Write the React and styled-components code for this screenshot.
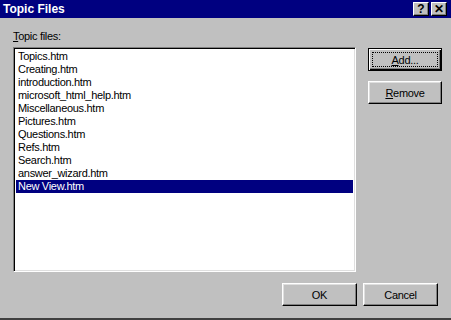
import React from "react";
import styled, { createGlobalStyle } from "styled-components";

const Global = createGlobalStyle`
  html, body { margin: 0; padding: 0; background: #c0c0c0; }
  body { font-family: "Liberation Sans", Arial, sans-serif; font-size: 11px; letter-spacing: -0.3px; }
`;

const Window = styled.div`
  width: 451px;
  height: 320px;
  box-sizing: border-box;
  background: #c0c0c0;
  display: flex;
  flex-direction: column;
  border-bottom: 2px solid #404040;
  overflow: hidden;
`;

const TitleBar = styled.div`
  height: 18px;
  flex: none;
  background: #000080;
  display: flex;
  align-items: center;
  padding: 0 4px 0 3px;
  color: #fff;
  font-family: "Liberation Sans", Arial, sans-serif;
  font-weight: bold;
  font-size: 12px;
  letter-spacing: 0;
`;

const TitleText = styled.span`
  flex: 1;
  line-height: 18px;
`;

const TitleButtons = styled.div`
  display: flex;
  gap: 2px;
`;

const TitleButton = styled.div`
  width: 16px;
  height: 14px;
  box-sizing: border-box;
  background: #c0c0c0;
  color: #000;
  border: 1px solid;
  border-color: #fff #000 #000 #fff;
  box-shadow: inset -1px -1px #808080;
  display: flex;
  align-items: center;
  justify-content: center;
  font-size: 12px;
  font-weight: bold;
  line-height: 1;
`;

const Body = styled.div`
  flex: 1;
  display: flex;
  flex-direction: column;
  padding: 11px 10px 0 13px;
`;

const MainRow = styled.div`
  display: flex;
  gap: 12px;
`;

const LeftCol = styled.div`
  display: flex;
  flex-direction: column;
  gap: 4px;
`;

const Label = styled.div`
  height: 14px;
  line-height: 14px;
  color: #000;
`;

const ListBox = styled.div`
  width: 343px;
  height: 225px;
  box-sizing: border-box;
  background: #fff;
  border: 1px solid;
  border-color: #808080 #fff #fff #808080;
  box-shadow: inset 1px 1px #000, inset -1px -1px #dfdfdf;
  padding: 2px;
  display: flex;
  flex-direction: column;
`;

const Item = styled.div`
  height: 13px;
  line-height: 13px;
  padding-left: 2px;
  white-space: nowrap;
  color: ${(p) => (p.$selected ? "#fff" : "#000")};
  background: ${(p) => (p.$selected ? "#000080" : "transparent")};
`;

const RightCol = styled.div`
  display: flex;
  flex-direction: column;
  gap: 10px;
  padding-top: 19px;
`;

const Button = styled.div`
  width: ${(p) => p.$w || 74}px;
  height: 23px;
  box-sizing: border-box;
  background: #c0c0c0;
  color: #000;
  display: flex;
  align-items: center;
  justify-content: center;
  border: 1px solid;
  border-color: #fff #000 #000 #fff;
  box-shadow: inset -1px -1px #808080, inset 1px 1px #dfdfdf;
  ${(p) =>
    p.$default &&
    `
    border: 1px solid #000;
    box-shadow: inset 1px 1px #fff, inset -1px -1px #000, inset -2px -2px #808080;
  `}
`;

const Focus = styled.span`
  width: calc(100% - 6px);
  height: calc(100% - 6px);
  box-sizing: border-box;
  border: 1px dotted #000;
  display: flex;
  align-items: center;
  justify-content: center;
`;

const Footer = styled.div`
  display: flex;
  justify-content: flex-end;
  gap: 6px;
  padding-top: 11px;
  padding-right: 3px;
`;

const files = [
  "Topics.htm",
  "Creating.htm",
  "introduction.htm",
  "microsoft_html_help.htm",
  "Miscellaneous.htm",
  "Pictures.htm",
  "Questions.htm",
  "Refs.htm",
  "Search.htm",
  "answer_wizard.htm",
  "New View.htm",
];

export default function App() {
  return (
    <>
      <Global />
      <Window>
        <TitleBar>
          <TitleText>Topic Files</TitleText>
          <TitleButtons>
            <TitleButton>?</TitleButton>
            <TitleButton>✕</TitleButton>
          </TitleButtons>
        </TitleBar>
        <Body>
          <MainRow>
            <LeftCol>
              <Label>
                <u>T</u>opic files:
              </Label>
              <ListBox>
                {files.map((f, i) => (
                  <Item key={f} $selected={i === files.length - 1}>
                    {f}
                  </Item>
                ))}
              </ListBox>
            </LeftCol>
            <RightCol>
              <Button $default>
                <Focus>
                  <span>
                    <u>A</u>dd...
                  </span>
                </Focus>
              </Button>
              <Button>
                <span>
                  <u>R</u>emove
                </span>
              </Button>
            </RightCol>
          </MainRow>
          <Footer>
            <Button $w={75}>OK</Button>
            <Button $w={75}>Cancel</Button>
          </Footer>
        </Body>
      </Window>
    </>
  );
}
